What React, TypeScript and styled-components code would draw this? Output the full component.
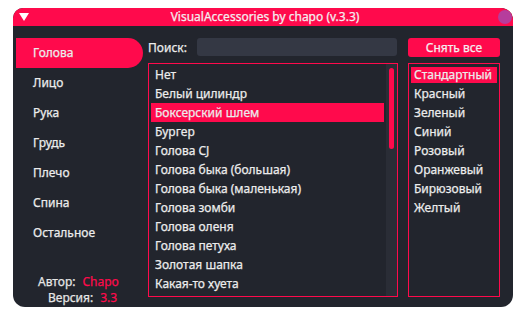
import React from "react";
import styled, { createGlobalStyle } from "styled-components";

const accent = "#ff0a4c";
const dark = "#22252d";

const GlobalStyle = createGlobalStyle`
  body {
    margin: 0;
    background: #ffffff;
    font-family: "Noto Sans", "DejaVu Sans", sans-serif;
    font-size: 12px;
    -webkit-text-stroke: 0.25px;
  }
`;

const Page = styled.div`
  padding: 8px 0 0 13px;
`;

const Window = styled.div`
  width: 500px;
  height: 299px;
  background: ${dark};
  border-radius: 10px 12px 12px 12px;
  overflow: hidden;
  display: flex;
  flex-direction: column;
`;

const TitleBar = styled.div`
  height: 18px;
  background: ${accent};
  display: grid;
  grid-template-columns: 24px 1fr 24px;
  align-items: center;
  color: #f4eef0;
`;

const Title = styled.div`
  text-align: center;
  line-height: 18px;
  padding-left: 4px;
`;

const Arrow = styled.div`
  width: 0;
  height: 0;
  margin-left: 6px;
  border-left: 5px solid transparent;
  border-right: 5px solid transparent;
  border-top: 8px solid #ffffff;
`;

const Dot = styled.div`
  width: 14px;
  height: 14px;
  border-radius: 50%;
  background: #b63d9c;
  justify-self: end;
  margin-right: 1px;
`;

const Body = styled.div`
  flex: 1;
  display: flex;
  padding: 12px 13px 1px 3px;
  min-height: 0;
`;

const Sidebar = styled.div`
  width: 127px;
  display: flex;
  flex-direction: column;
  margin-right: 5px;
`;

const NavItem = styled.div<{ $active?: boolean }>`
  height: 30px;
  line-height: 30px;
  padding-left: 17px;
  color: #ececec;
  background: ${(p) => (p.$active ? accent : "transparent")};
  border-radius: 0 15px 15px 0;
`;

const Credits = styled.div`
  margin-top: auto;
  display: flex;
  flex-direction: column;
  gap: 0;
  color: #e6e6e6;
`;

const CreditLine = styled.div<{ $indent: number }>`
  padding-left: ${(p) => p.$indent}px;
  height: 16px;
  line-height: 16px;
  span {
    color: ${accent};
    margin-left: 7px;
  }
`;

const Middle = styled.div`
  width: 250px;
  display: flex;
  flex-direction: column;
  padding-bottom: 9px;
  margin-right: 10px;
`;

const SearchRow = styled.div`
  display: flex;
  align-items: center;
  height: 18px;
  margin-bottom: 7px;
  color: #ececec;
`;

const SearchInput = styled.div`
  margin-left: auto;
  width: 200px;
  height: 18px;
  background: #343844;
  border-radius: 3px;
  margin-right: 1px;
`;

const ListBox = styled.div`
  flex: 1;
  border: 1px solid ${accent};
  display: flex;
  padding: 1px 0 0 2px;
`;

const Items = styled.div`
  flex: 1;
  margin-right: 2px;
`;

const Item = styled.div<{ $active?: boolean }>`
  height: 19px;
  line-height: 19px;
  padding-left: 4px;
  color: #ececec;
  background: ${(p) => (p.$active ? accent : "transparent")};
  white-space: nowrap;
`;

const Track = styled.div`
  width: 11px;
  margin-top: -1px;
  background: #2a2d36;
  padding: 4px 3px 0 3px;
  box-sizing: border-box;
`;

const Thumb = styled.div`
  width: 5px;
  height: 81px;
  border-radius: 3px;
  background: ${accent};
`;

const Right = styled.div`
  width: 92px;
  display: flex;
  flex-direction: column;
  padding-bottom: 9px;
`;

const Button = styled.div`
  height: 19px;
  line-height: 19px;
  margin-bottom: 6px;
  background: ${accent};
  border-radius: 3px;
  text-align: center;
  color: #f4eef0;
`;

const ColorBox = styled.div`
  flex: 1;
  border: 1px solid ${accent};
  padding: 3px 2px 0 2px;
`;

const ColorItem = styled.div<{ $active?: boolean }>`
  height: 16px;
  line-height: 16px;
  margin-bottom: 3px;
  padding-left: 3px;
  color: #ececec;
  background: ${(p) => (p.$active ? accent : "transparent")};
  white-space: nowrap;
`;

const categories = ["Голова", "Лицо", "Рука", "Грудь", "Плечо", "Спина", "Остальное"];

const accessories = [
  "Нет",
  "Белый цилиндр",
  "Боксерский шлем",
  "Бургер",
  "Голова CJ",
  "Голова быка (большая)",
  "Голова быка (маленькая)",
  "Голова зомби",
  "Голова оленя",
  "Голова петуха",
  "Золотая шапка",
  "Какая-то хуета",
];

const colors = [
  "Стандартный",
  "Красный",
  "Зеленый",
  "Синий",
  "Розовый",
  "Оранжевый",
  "Бирюзовый",
  "Желтый",
];

export default function App() {
  return (
    <Page>
      <GlobalStyle />
      <Window>
        <TitleBar>
          <Arrow />
          <Title>VisualAccessories by chapo (v.3.3)</Title>
          <Dot />
        </TitleBar>
        <Body>
          <Sidebar>
            {categories.map((c, i) => (
              <NavItem key={c} $active={i === 0}>
                {c}
              </NavItem>
            ))}
            <Credits>
              <CreditLine $indent={22}>
                Автор:<span>Chapo</span>
              </CreditLine>
              <CreditLine $indent={32}>
                Версия:<span>3.3</span>
              </CreditLine>
            </Credits>
          </Sidebar>
          <Middle>
            <SearchRow>
              Поиск:
              <SearchInput />
            </SearchRow>
            <ListBox>
              <Items>
                {accessories.map((a, i) => (
                  <Item key={a} $active={i === 2}>
                    {a}
                  </Item>
                ))}
              </Items>
              <Track>
                <Thumb />
              </Track>
            </ListBox>
          </Middle>
          <Right>
            <Button>Снять все</Button>
            <ColorBox>
              {colors.map((c, i) => (
                <ColorItem key={c} $active={i === 0}>
                  {c}
                </ColorItem>
              ))}
            </ColorBox>
          </Right>
        </Body>
      </Window>
    </Page>
  );
}
